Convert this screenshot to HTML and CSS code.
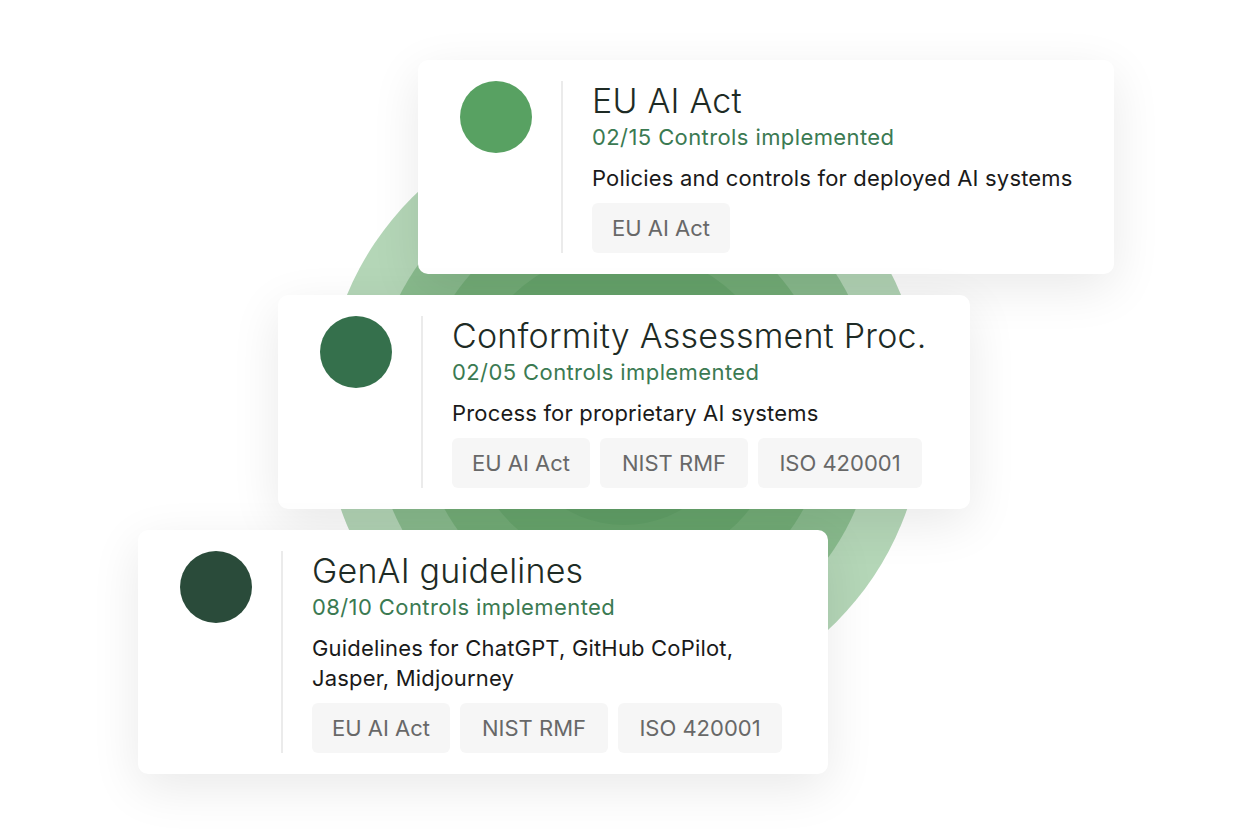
FILE: index.html
```html
<!DOCTYPE html>
<html lang="en">
<head>
<meta charset="utf-8">
<title>AI governance frameworks</title>
<link rel="stylesheet" href="styles.css">
</head>
<body>
<main class="stage">
  <div class="rings" aria-hidden="true">
    <div class="ring ring-1"></div>
    <div class="ring ring-2"></div>
    <div class="ring ring-3"></div>
    <div class="ring ring-4"></div>
    <div class="ring ring-5"></div>
  </div>

  <section class="card card-eu">
    <div class="dot dot-light"></div>
    <div class="divider"></div>
    <div class="body">
      <h2 class="title">EU AI Act</h2>
      <p class="progress">02/15 Controls implemented</p>
      <p class="desc">Policies and controls for deployed AI systems</p>
      <div class="tags">
        <span class="tag tag-eu">EU AI Act</span>
      </div>
    </div>
  </section>

  <section class="card card-conf">
    <div class="dot dot-mid"></div>
    <div class="divider"></div>
    <div class="body">
      <h2 class="title">Conformity Assessment Proc.</h2>
      <p class="progress">02/05 Controls implemented</p>
      <p class="desc">Process for proprietary AI systems</p>
      <div class="tags">
        <span class="tag tag-eu">EU AI Act</span>
        <span class="tag tag-nist">NIST RMF</span>
        <span class="tag tag-iso">ISO 420001</span>
      </div>
    </div>
  </section>

  <section class="card card-gen">
    <div class="dot dot-dark"></div>
    <div class="divider"></div>
    <div class="body">
      <h2 class="title">GenAI guidelines</h2>
      <p class="progress">08/10 Controls implemented</p>
      <p class="desc">Guidelines for ChatGPT, GitHub CoPilot,<br>Jasper, Midjourney</p>
      <div class="tags">
        <span class="tag tag-eu">EU AI Act</span>
        <span class="tag tag-nist">NIST RMF</span>
        <span class="tag tag-iso">ISO 420001</span>
      </div>
    </div>
  </section>
</main>
</body>
</html>
```

FILE: styles.css
```css
* {
  box-sizing: border-box;
}

html, body {
  margin: 0;
  padding: 0;
  background: #ffffff;
}

body {
  font-family: "Inter", "Liberation Sans", sans-serif;
  color: #1c1c1c;
  width: 1252px;
  height: 836px;
  overflow: hidden;
}

.stage {
  position: relative;
  width: 1252px;
  height: 836px;
  padding-top: 60px;
  display: flex;
  flex-direction: column;
  align-items: flex-start;
  gap: 21px;
}

/* decorative concentric rings behind the cards */
.rings {
  position: absolute;
  left: 624px;
  top: 410px;
  width: 0;
  height: 0;
  z-index: 0;
}

.ring {
  position: absolute;
  border-radius: 50%;
  transform: translate(-50%, -50%);
}

.ring-1 { width: 600px; height: 600px; background: #b4d6b7; }
.ring-2 { width: 504px; height: 504px; background: #8abc8e; }
.ring-3 { width: 410px; height: 410px; background: #74ae78; }
.ring-4 { width: 320px; height: 320px; background: #68a66d; }
.ring-5 { width: 230px; height: 230px; background: #62a168; }

.card {
  position: relative;
  z-index: 1;
  display: flex;
  align-items: stretch;
  background: #ffffff;
  border-radius: 10px;
  padding: 21px 40px 21px 42px;
  box-shadow: 0 14px 50px rgba(0, 0, 0, 0.09);
}

.card-eu { margin-left: 418px; width: 696px; }
.card-conf { margin-left: 278px; width: 692px; }
.card-gen { margin-left: 138px; width: 690px; }

.dot {
  flex: none;
  width: 72px;
  height: 72px;
  border-radius: 50%;
}

.dot-light { background: #58a162; }
.dot-mid { background: #35704c; }
.dot-dark { background: #2a4b3a; }

.divider {
  flex: none;
  width: 2px;
  margin: 0 29px 0 29px;
  background: #ebebeb;
}

.body {
  flex: 1;
  min-width: 0;
}

.title {
  margin: 0;
  font-size: 34px;
  line-height: 40px;
  font-weight: 300;
  letter-spacing: 0.2px;
  color: #1e2b25;
  white-space: nowrap;
}

.progress {
  margin: 2px 0 0;
  font-size: 22px;
  line-height: 28px;
  font-weight: 400;
  letter-spacing: 0.4px;
  color: #3b7a52;
}

.desc {
  margin: 12px 0 0;
  font-size: 22px;
  line-height: 30px;
  font-weight: 400;
  letter-spacing: 0.18px;
  color: #1a1a1a;
}

.tags {
  display: flex;
  gap: 10px;
  margin-top: 10px;
}

.tag {
  height: 50px;
  line-height: 50px;
  border-radius: 6px;
  background: #f6f6f6;
  color: #686868;
  font-size: 22px;
  letter-spacing: 0;
  text-align: center;
}

.tag-eu { width: 138px; }
.tag-nist { width: 148px; }
.tag-iso { width: 164px; }
```
